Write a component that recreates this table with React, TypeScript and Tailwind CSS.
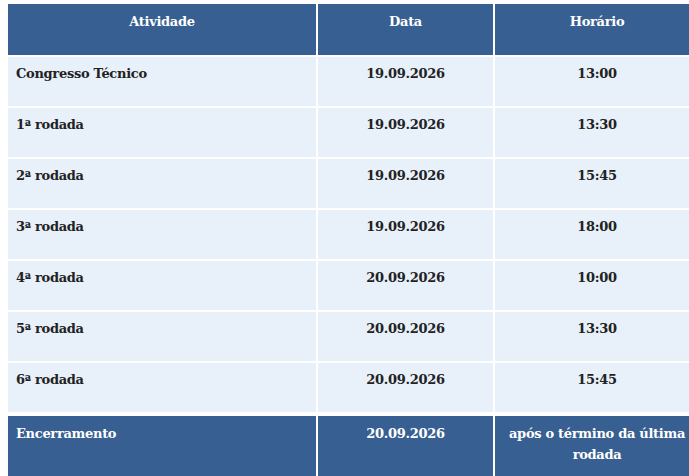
const rows = [
  { atividade: 'Congresso Técnico', data: '19.09.2026', horario: '13:00' },
  { atividade: '1ª rodada', data: '19.09.2026', horario: '13:30' },
  { atividade: '2ª rodada', data: '19.09.2026', horario: '15:45' },
  { atividade: '3ª rodada', data: '19.09.2026', horario: '18:00' },
  { atividade: '4ª rodada', data: '20.09.2026', horario: '10:00' },
  { atividade: '5ª rodada', data: '20.09.2026', horario: '13:30' },
  { atividade: '6ª rodada', data: '20.09.2026', horario: '15:45' },
];

const font = { fontFamily: '"DejaVu Serif", "Liberation Serif", serif' };

export default function App() {
  return (
    <div className="w-[689px] h-[476px] overflow-hidden bg-white" style={font}>
      <div className="ml-[8px] mt-[4px] w-[691px] grid grid-cols-[308px_175px_204px] gap-[2px] text-[13px] font-bold leading-[21px] tracking-[-0.3px]">
        <div className="h-[51px] bg-[#385f91] text-white text-center pt-[7px]">Atividade</div>
        <div className="h-[51px] bg-[#385f91] text-white text-center pt-[7px]">Data</div>
        <div className="h-[51px] bg-[#385f91] text-white text-center pt-[7px]">Horário</div>

        {rows.map((r) => (
          <div key={r.atividade} className="contents">
            <div className="h-[49px] bg-[#e8f0fa] text-[#222222] px-[8px] pt-[6px]">{r.atividade}</div>
            <div className="h-[49px] bg-[#e8f0fa] text-[#222222] text-center pt-[6px]">{r.data}</div>
            <div className="h-[49px] bg-[#e8f0fa] text-[#222222] text-center pt-[6px]">{r.horario}</div>
          </div>
        ))}

        <div className="h-[62px] bg-[#385f91] text-white px-[8px] pt-[7px] mt-[2px]">Encerramento</div>
        <div className="h-[62px] bg-[#385f91] text-white text-center pt-[7px] mt-[2px]">20.09.2026</div>
        <div className="h-[62px] bg-[#385f91] text-white text-center pt-[7px] mt-[2px] px-[4px]">
          após o término da última rodada
        </div>
      </div>
    </div>
  );
}
